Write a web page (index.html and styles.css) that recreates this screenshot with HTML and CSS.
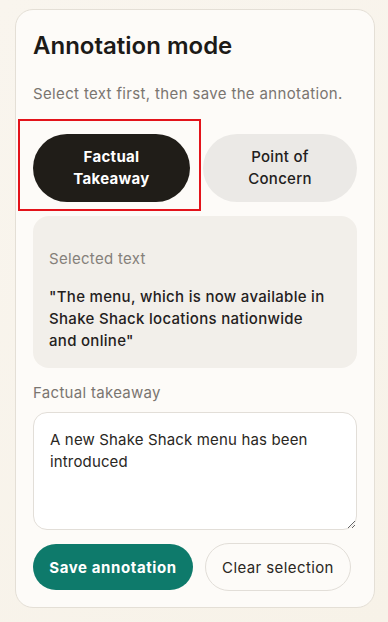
FILE: index.html
```html
<!DOCTYPE html>
<html>
<head>
<meta charset="utf-8">
<link rel="stylesheet" href="styles.css">
</head>
<body>
<div class="card">
  <h1 class="title">Annotation mode</h1>
  <p class="sub">Select text first, then save the annotation.</p>
  <div class="modes">
    <button class="mode active">Factual<br>Takeaway</button>
    <button class="mode">Point of<br>Concern</button>
    <div class="highlight"></div>
  </div>
  <div class="selected">
    <div class="sel-label">Selected text</div>
    <div class="sel-text">"The menu, which is now available in Shake Shack locations nationwide and online"</div>
  </div>
  <label class="field-label">Factual takeaway</label>
  <textarea class="ta">A new Shake Shack menu has been introduced</textarea>
  <div class="actions">
    <button class="save">Save annotation</button>
    <button class="clear">Clear selection</button>
  </div>
</div>
</body>
</html>
```
FILE: styles.css
```css
html, body { margin: 0; padding: 0; }
body {
  width: 388px;
  height: 622px;
  background: linear-gradient(135deg, #f9f5ee 0%, #f7f2e8 100%);
  font-family: Inter, "Noto Sans", sans-serif;
  color: #1f1c18;
  box-sizing: border-box;
  padding: 9px 12px 0 15px;
}
.card {
  width: 360px;
  height: 599px;
  box-sizing: border-box;
  background: #fdfbf8;
  border: 1px solid #e4dfd6;
  border-radius: 18px;
  padding: 22px 17px 0 17px;
  display: flex;
  flex-direction: column;
}
.title {
  margin: 0;
  font-size: 24px;
  font-weight: 600;
  line-height: 28px;
  letter-spacing: 0;
  color: #1c1a17;
}
.sub {
  margin: 24px 0 0 0;
  font-size: 15px;
  line-height: 20px;
  color: #7a7570;
  letter-spacing: 0.35px;
}
.modes {
  position: relative;
  display: flex;
  gap: 13px;
  margin-top: 30px;
}
.mode {
  height: 68px;
  border: none;
  border-radius: 34px;
  font-family: inherit;
  font-size: 15px;
  line-height: 22px;
  font-weight: 500;
  background: #ebe9e6;
  color: #22201c;
  padding: 0;
  letter-spacing: 0.3px;
}
.mode:first-child { width: 157px; }
.mode:nth-child(2) { width: 154px; }
.mode.active {
  background: #201d18;
  color: #fff;
  font-weight: 700;
}
.highlight {
  position: absolute;
  left: -15px;
  top: -15px;
  width: 179px;
  height: 88px;
  border: 2px solid #e3131b;
}
.selected {
  margin-top: 14px;
  background: #f2efea;
  border-radius: 16px;
  padding: 32px 28px 16px 16px;
  height: 152px;
  box-sizing: border-box;
}
.sel-label {
  font-size: 15px;
  line-height: 22px;
  color: #85807a;
  letter-spacing: 0.3px;
}
.sel-text {
  margin-top: 16px;
  font-size: 15px;
  line-height: 22px;
  font-weight: 500;
  color: #24211d;
  letter-spacing: 0.3px;
}
.field-label {
  margin-top: 15px;
  font-size: 15px;
  line-height: 20px;
  color: #7a7570;
  letter-spacing: 0.3px;
}
.ta {
  margin-top: 9px;
  width: 324px;
  height: 118px;
  box-sizing: border-box;
  border: 1px solid #e2ded8;
  border-radius: 14px;
  background: #fff;
  padding: 16px 16px;
  font-family: inherit;
  font-size: 15px;
  line-height: 22px;
  color: #2a2723;
  resize: vertical;
  letter-spacing: 0.15px;
}
.actions {
  display: flex;
  gap: 12px;
  margin-top: 14px;
}
.save {
  width: 160px;
  height: 46px;
  border: none;
  border-radius: 23px;
  background: #0e7a6b;
  color: #fff;
  font-family: inherit;
  font-size: 15px;
  font-weight: 700;
  padding: 0;
  letter-spacing: 0.6px;
}
.clear {
  width: 146px;
  height: 48px;
  margin-top: -1px;
  border: 1px solid #e2ded8;
  border-radius: 24px;
  background: #fdfbf8;
  color: #2a2723;
  font-family: inherit;
  font-size: 15px;
  padding: 0;
  letter-spacing: 0.4px;
}
```
